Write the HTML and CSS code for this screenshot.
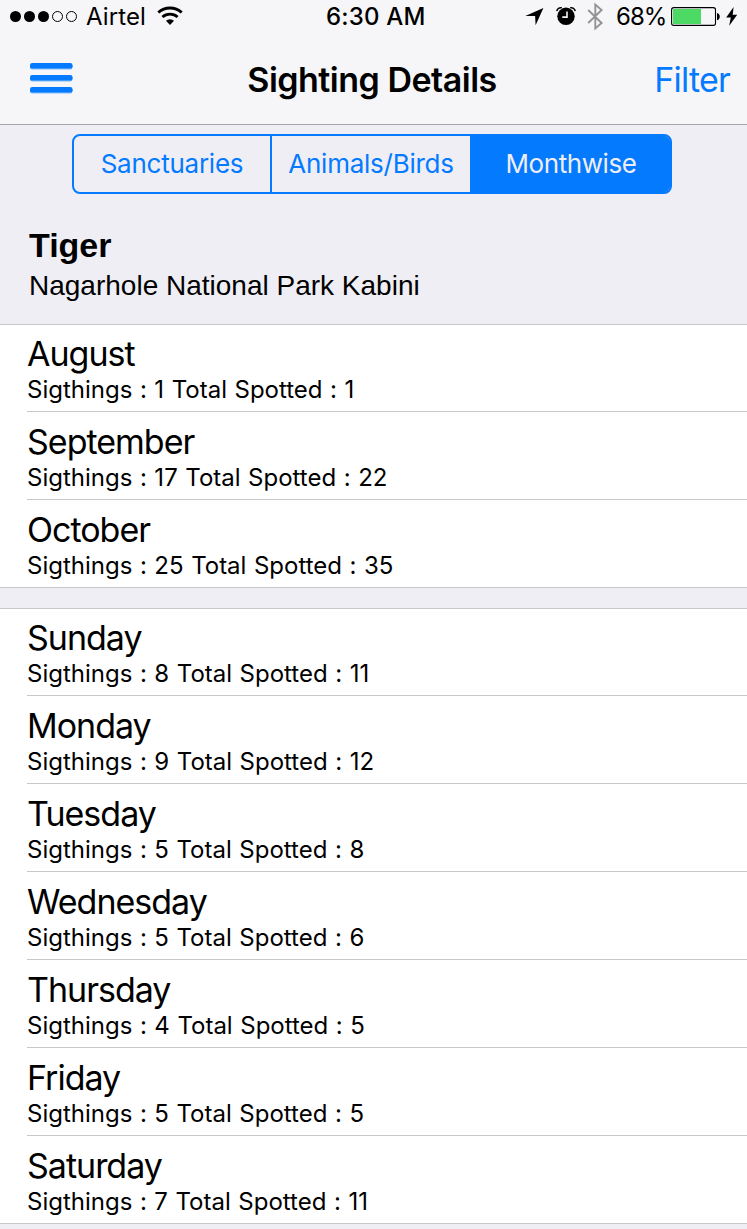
FILE: index.html
```html
<!DOCTYPE html>
<html lang="en">
<head>
    <meta charset="UTF-8">
    <meta name="viewport" content="width=device-width, initial-scale=1.0">
    <title>Sighting Details</title>
    <link rel="stylesheet" href="styles.css">
</head>
<body>
    <header class="header">
        <div class="status-bar">
            <div class="status-left">
                <svg class="signal" width="68" height="33" viewBox="0 0 68 33">
                    <circle cx="5.5" cy="16.5" r="5.5"/>
                    <circle cx="19.5" cy="16.5" r="5.5"/>
                    <circle cx="33.5" cy="16.5" r="5.5"/>
                    <circle cx="47.5" cy="16.5" r="5" fill="none" stroke="#000"/>
                    <circle cx="61.5" cy="16.5" r="5" fill="none" stroke="#000"/>
                </svg>
                <span class="carrier">Airtel</span>
                <svg class="wifi" width="26" height="33" viewBox="0 0 26 33">
                    <path d="M1.3 12.500a17.300 17.300 0 0 1 23.400 0" fill="none" stroke="#000" stroke-width="3"/>
                    <path d="M5.400 17a11.200 11.200 0 0 1 15.200 0" fill="none" stroke="#000" stroke-width="2.7"/>
                    <path d="M13 25l-4-4.200a5.800 5.800 0 0 1 8 0z"/>
                </svg>
            </div>
            <span class="time">6:30 AM</span>
            <div class="status-right">
                <svg class="location" width="19" height="33" viewBox="0 0 19 33">
                    <path d="M18.4 8L10.6 25.3l-.5-9.2L.3 15.9z"/>
                </svg>
                <svg class="alarm" width="20" height="33" viewBox="0 0 20 33">
                    <circle cx="10" cy="16.3" r="8.7"/>
                    <path d="M.8 11.2a4 4 0 0 1 5-3.4M19.2 11.2a4 4 0 0 0-5-3.4" fill="none" stroke="#000" stroke-width="1.5"/>
                    <path d="M11 11.5v5.6H6.3" fill="none" stroke="#f6f6f8" stroke-width="1.6"/>
                </svg>
                <svg class="bluetooth" width="17" height="33" viewBox="0 0 17 33">
                    <path d="M1.2 10l13.4 13-6.3 5.500V4.500l6.300 5.500L1.200 23" fill="none" stroke="#939395" stroke-width="1.9"/>
                </svg>
                <span class="percent">68%</span>
                <svg class="battery" width="50" height="33" viewBox="0 0 50 33">
                    <rect x=".6" y="7.6" width="43.9" height="17.8" rx="2.2" fill="none" stroke="#000" stroke-width="1.1"/>
                    <rect x="2" y="9" width="28" height="15" fill="#4cd964"/>
                    <path d="M46 13c3.700.6 3.700 6.700 0 7.200z"/>
                </svg>
                <svg class="bolt" width="12" height="33" viewBox="0 0 12 33">
                    <path d="M7.600 7L.2 17.600h4.600L3.200 25.700l8-11H6.700z"/>
                </svg>
            </div>
        </div>
        <nav class="navbar">
            <svg class="menu" width="44" height="33" viewBox="0 0 44 33">
                <g fill="#80bdfb">
                    <rect x="0" y="2" width="42.500" height="5.500" rx="2.200"/>
                    <rect x="0" y="14" width="42.500" height="5.500" rx="2.200"/>
                    <rect x="0" y="26" width="42.500" height="5.500" rx="2.200"/>
                </g>
                <g fill="#047aff">
                    <rect x="0" y="1" width="42.500" height="5.600" rx="2.200"/>
                    <rect x="0" y="13" width="42.500" height="5.600" rx="2.200"/>
                    <rect x="0" y="25" width="42.500" height="5.600" rx="2.200"/>
                </g>
            </svg>
            <h1 class="title">Sighting Details</h1>
            <a class="filter">Filter</a>
        </nav>
    </header>

    <div class="segments">
        <div class="segment">Sanctuaries</div>
        <div class="segment">Animals/Birds</div>
        <div class="segment active">Monthwise</div>
    </div>

    <div class="summary">
        <h2 class="animal">Tiger</h2>
        <p class="park">Nagarhole National Park Kabini</p>
    </div>

    <!-- months -->
    <ul class="list">
        <li class="row"><span class="name">August</span><span class="detail">Sigthings : 1 Total Spotted : 1</span></li>
        <li class="row"><span class="name">September</span><span class="detail">Sigthings : 17 Total Spotted : 22</span></li>
        <li class="row"><span class="name">October</span><span class="detail">Sigthings : 25 Total Spotted : 35</span></li>
    </ul>

    <!-- days -->
    <ul class="list">
        <li class="row"><span class="name">Sunday</span><span class="detail">Sigthings : 8 Total Spotted : 11</span></li>
        <li class="row"><span class="name">Monday</span><span class="detail">Sigthings : 9 Total Spotted : 12</span></li>
        <li class="row"><span class="name">Tuesday</span><span class="detail">Sigthings : 5 Total Spotted : 8</span></li>
        <li class="row"><span class="name">Wednesday</span><span class="detail">Sigthings : 5 Total Spotted : 6</span></li>
        <li class="row"><span class="name">Thursday</span><span class="detail">Sigthings : 4 Total Spotted : 5</span></li>
        <li class="row"><span class="name">Friday</span><span class="detail">Sigthings : 5 Total Spotted : 5</span></li>
        <li class="row"><span class="name">Saturday</span><span class="detail">Sigthings : 7 Total Spotted : 11</span></li>
    </ul>
</body>
</html>
```
FILE: styles.css
```css
* {
    margin: 0;
    padding: 0;
    box-sizing: border-box;
}

body {
    font-family: Inter, "Liberation Sans", sans-serif;
    background: #efeef4;
    color: #000;
    height: 1229px;
    overflow: hidden;
}

svg {
    display: block;
    flex-shrink: 0;
}

.header {
    height: 125px;
    background: #f6f6f8;
    border-bottom: 1px solid #a7a7aa;
}

.status-bar {
    display: grid;
    grid-template-columns: 1fr 100px 1fr;
    height: 33px;
    line-height: 34px;
    font-size: 24px;
    padding: 0 9px 0 10px;
    white-space: nowrap;
}

.status-left,
.status-right {
    display: flex;
}

.status-right {
    justify-content: flex-end;
}

.carrier {
    width: 62px;
    margin-left: 8px;
    letter-spacing: 0.1px;
}

.wifi {
    margin-left: 9px;
}

.time {
    font-weight: 500;
    text-align: center;
    letter-spacing: 0.2px;
    padding-left: 2px;
}

.alarm {
    margin-left: 12px;
}

.bluetooth {
    margin-left: 11px;
}

.percent {
    width: 50px;
    margin-left: 12px;
    letter-spacing: -1px;
}

.battery {
    margin-left: 5px;
}

.bolt {
    margin-left: 5px;
}

.navbar {
    display: grid;
    grid-template-columns: 150px 1fr 166px;
    align-items: center;
    height: 91px;
    padding: 0 17px 0 30px;
}

.title {
    font-size: 34px;
    font-weight: 600;
    line-height: 44px;
    letter-spacing: -0.5px;
    padding-top: 3px;
    text-align: center;
    white-space: nowrap;
}

.filter {
    color: #047aff;
    font-size: 34px;
    line-height: 44px;
    letter-spacing: -0.8px;
    padding-top: 3px;
    text-align: right;
}

.segments {
    display: grid;
    grid-template-columns: 198px 200px 198px;
    width: 600px;
    height: 60px;
    margin: 9px 0 0 72px;
    border: 2px solid #047aff;
    border-radius: 8px;
    background: #efeef4;
    overflow: hidden;
}

.segment {
    display: flex;
    align-items: center;
    justify-content: center;
    color: #047aff;
    font-size: 26px;
    letter-spacing: -0.25px;
    padding-bottom: 1px;
    border-right: 2px solid #047aff;
}

.segment.active {
    background: #047aff;
    color: #efeef4;
    letter-spacing: -0.4px;
    border-right: none;
    box-shadow: 0 0 0 3px #047aff;
    clip-path: inset(-3px -3px -3px 0);
}

.summary {
    height: 130px;
    padding: 31px 29px 0;
    font-family: "Liberation Sans", sans-serif;
}

.animal {
    font-size: 34px;
    line-height: 40px;
}

.park {
    font-size: 28px;
    line-height: 42px;
    white-space: nowrap;
}

.list {
    list-style: none;
    background: #fff;
    border-top: 1px solid #c8c7cc;
    border-bottom: 1px solid #c8c7cc;
    margin-bottom: 20px;
}

.row {
    display: flex;
    flex-direction: column;
    justify-content: flex-end;
    height: 88px;
    margin-left: 27px;
    padding-bottom: 6px;
    border-bottom: 1px solid #c8c7cc;
    white-space: nowrap;
}

.row:first-child {
    height: 87px;
}

.row:last-child {
    height: 87px;
    border-bottom: none;
}

.name {
    font-size: 34px;
    line-height: 40px;
    letter-spacing: -1px;
    padding-bottom: 1px;
}

.detail {
    font-size: 24px;
    line-height: 30px;
    word-spacing: 0.8px;
    font-feature-settings: "calt" 0;
}
```
